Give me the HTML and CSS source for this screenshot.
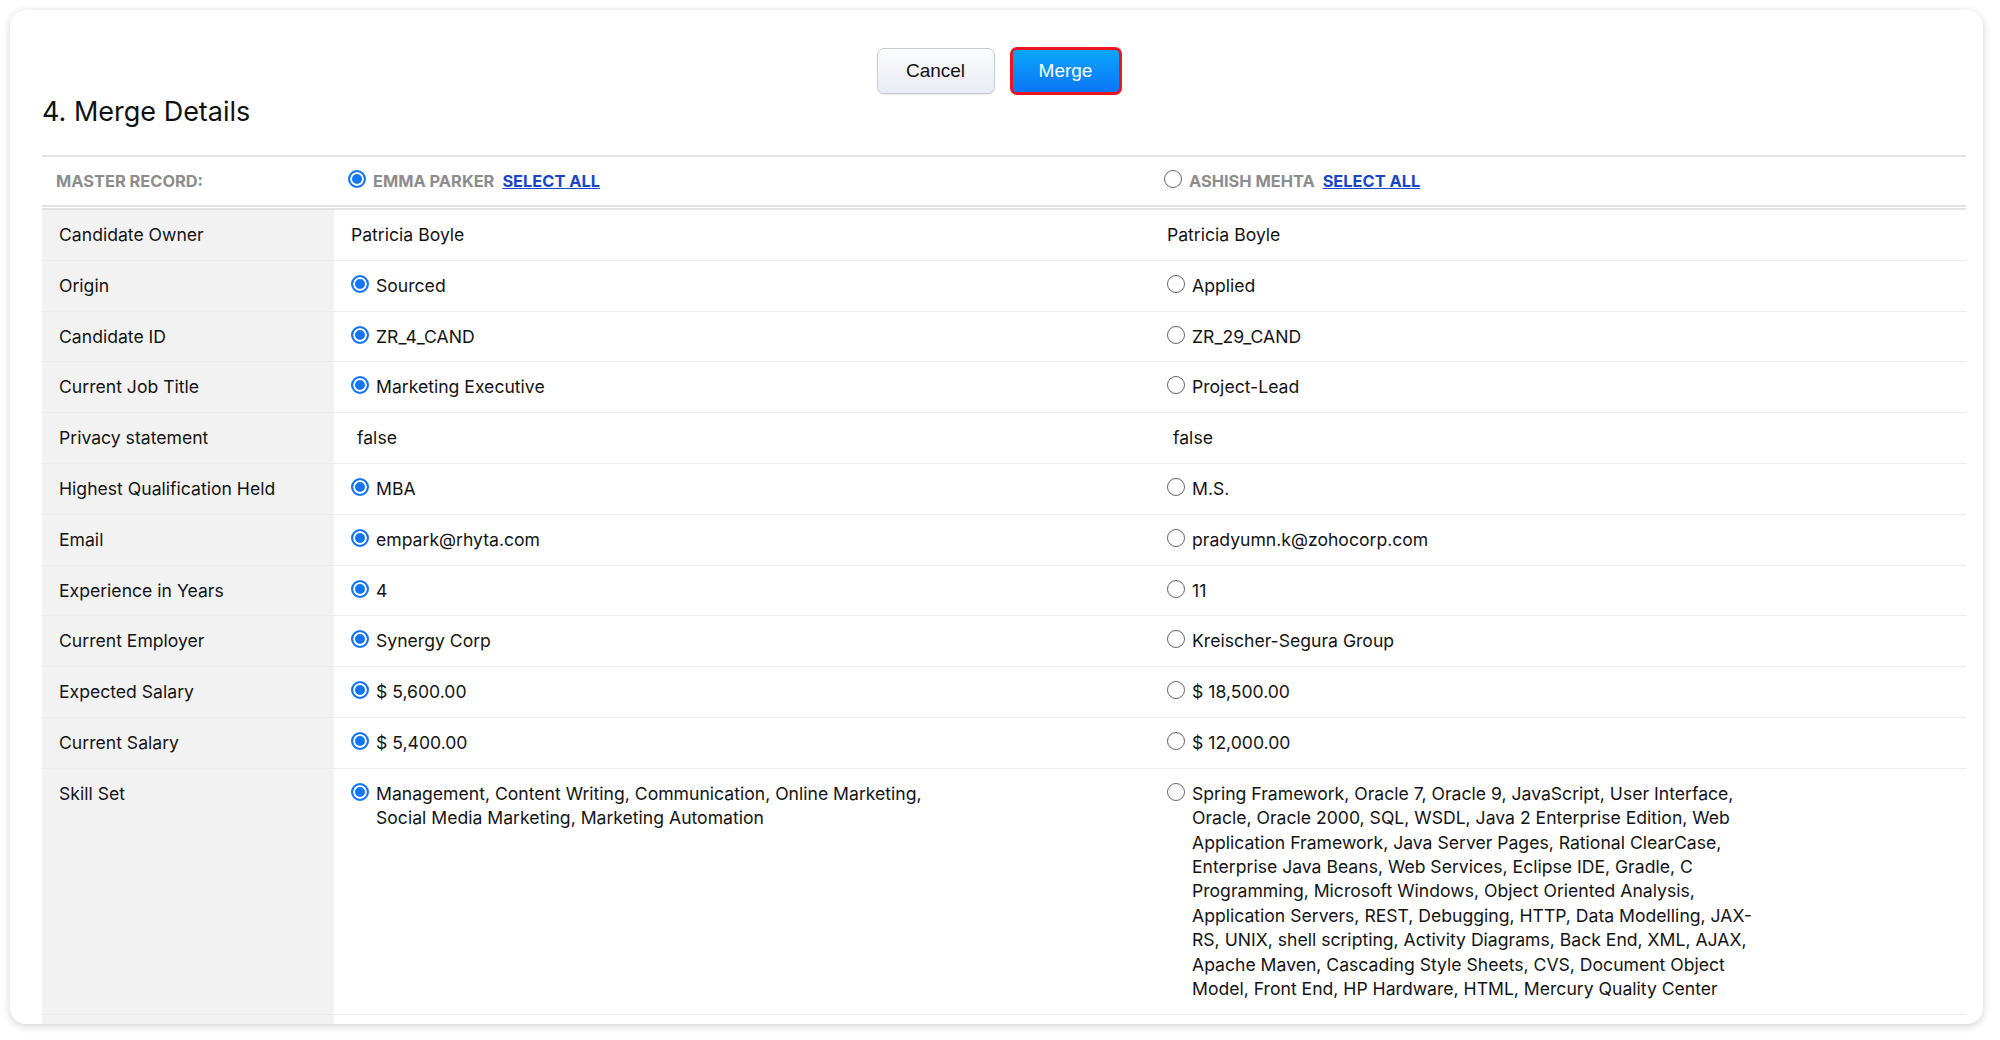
FILE: index.html
```html
<!DOCTYPE html>
<html lang="en">
<head>
  <meta charset="UTF-8" />
  <title>Merge Candidates</title>
  <link rel="stylesheet" href="styles.css">
</head>
<body>
<div class="card">
  <div class="actions">
    <button class="btn btn-cancel">Cancel</button>
    <button class="btn btn-merge">Merge</button>
  </div>
  <h2 class="title">4. Merge Details</h2>

  <div class="merge-table">
    <div class="row head">
      <div class="label">MASTER RECORD:</div>
      <div class="cell"><span class="radio on"></span><span class="rec-name">EMMA PARKER</span><a class="select-all" href="#">SELECT ALL</a></div>
      <div class="cell"><span class="radio"></span><span class="rec-name">ASHISH MEHTA</span><a class="select-all" href="#">SELECT ALL</a></div>
    </div>

    <div class="row">
      <div class="label">Candidate Owner</div>
      <div class="cell"><span class="val">Patricia Boyle</span></div>
      <div class="cell"><span class="val">Patricia Boyle</span></div>
    </div>
    <div class="row">
      <div class="label">Origin</div>
      <div class="cell"><span class="radio on"></span><span class="val">Sourced</span></div>
      <div class="cell"><span class="radio"></span><span class="val">Applied</span></div>
    </div>
    <div class="row">
      <div class="label">Candidate ID</div>
      <div class="cell"><span class="radio on"></span><span class="val">ZR_4_CAND</span></div>
      <div class="cell"><span class="radio"></span><span class="val">ZR_29_CAND</span></div>
    </div>
    <div class="row">
      <div class="label">Current Job Title</div>
      <div class="cell"><span class="radio on"></span><span class="val">Marketing Executive</span></div>
      <div class="cell"><span class="radio"></span><span class="val">Project-Lead</span></div>
    </div>
    <div class="row">
      <div class="label">Privacy statement</div>
      <div class="cell"><span class="val plain">false</span></div>
      <div class="cell"><span class="val plain">false</span></div>
    </div>
    <div class="row">
      <div class="label">Highest Qualification Held</div>
      <div class="cell"><span class="radio on"></span><span class="val">MBA</span></div>
      <div class="cell"><span class="radio"></span><span class="val">M.S.</span></div>
    </div>
    <div class="row">
      <div class="label">Email</div>
      <div class="cell"><span class="radio on"></span><span class="val">empark@rhyta.com</span></div>
      <div class="cell"><span class="radio"></span><span class="val">pradyumn.k@zohocorp.com</span></div>
    </div>
    <div class="row">
      <div class="label">Experience in Years</div>
      <div class="cell"><span class="radio on"></span><span class="val">4</span></div>
      <div class="cell"><span class="radio"></span><span class="val">11</span></div>
    </div>
    <div class="row">
      <div class="label">Current Employer</div>
      <div class="cell"><span class="radio on"></span><span class="val">Synergy Corp</span></div>
      <div class="cell"><span class="radio"></span><span class="val">Kreischer-Segura Group</span></div>
    </div>
    <div class="row">
      <div class="label">Expected Salary</div>
      <div class="cell"><span class="radio on"></span><span class="val">$ 5,600.00</span></div>
      <div class="cell"><span class="radio"></span><span class="val">$ 18,500.00</span></div>
    </div>
    <div class="row">
      <div class="label">Current Salary</div>
      <div class="cell"><span class="radio on"></span><span class="val">$ 5,400.00</span></div>
      <div class="cell"><span class="radio"></span><span class="val">$ 12,000.00</span></div>
    </div>
    <div class="row">
      <div class="label">Skill Set</div>
      <div class="cell"><span class="radio on"></span><span class="val">Management, Content Writing, Communication, Online Marketing, Social Media Marketing, Marketing Automation</span></div>
      <div class="cell"><span class="radio"></span><span class="val">Spring Framework, Oracle 7, Oracle 9, JavaScript, User Interface, Oracle, Oracle 2000, SQL, WSDL, Java 2 Enterprise Edition, Web Application Framework, Java Server Pages, Rational ClearCase, Enterprise Java Beans, Web Services, Eclipse IDE, Gradle, C Programming, Microsoft Windows, Object Oriented Analysis, Application Servers, REST, Debugging, HTTP, Data Modelling, JAX-RS, UNIX, shell scripting, Activity Diagrams, Back End, XML, AJAX, Apache Maven, Cascading Style Sheets, CVS, Document Object Model, Front End, HP Hardware, HTML, Mercury Quality Center</span></div>
    </div>
  </div>
</div>
</body>
</html>
```

FILE: styles.css
```css
body {
  margin: 0;
  background: #ffffff;
  font-family: Inter, "Open Sans", sans-serif;
  color: #141414;
}
.card {
  box-sizing: border-box;
  width: 1973px;
  height: 1014px;
  margin: 10px;
  padding: 37px 17px 0 32px;
  background: #fff;
  border-radius: 16px;
  box-shadow: 0 2px 9px rgba(0,0,0,0.18);
  overflow: hidden;
}
.actions {
  display: flex;
  justify-content: center;
  align-items: center;
  gap: 15px;
  height: 48px;
  padding-right: 10px;
}
.btn {
  font-family: "Liberation Sans", Arial, sans-serif;
  font-size: 19px;
  border-radius: 7px;
  cursor: pointer;
  box-sizing: border-box;
}
.btn-cancel {
  width: 118px;
  height: 46px;
  color: #111;
  border: 1px solid #c6cad5;
  background: linear-gradient(#fbfcfe, #e9ecf3);
  box-shadow: 0 1px 1px rgba(0,0,0,0.08);
}
.btn-merge {
  width: 112px;
  height: 48px;
  color: #fff;
  border: 3px solid #ea1424;
  background: linear-gradient(#0aa6f8, #0a76f6);
}
.title {
  margin: 0 0 26px;
  font-size: 27px;
  line-height: 34px;
  font-weight: 400;
  color: #111;
}
.merge-table {
  border-top: 2px solid #e4e4e4;
  background: linear-gradient(to right, #f2f2f2 292px, #fff 292px);
  padding-bottom: 20px;
}
.row {
  display: grid;
  grid-template-columns: 292px 1fr 1fr;
  border-bottom: 1px solid #ececec;
  font-size: 17.6px;
  line-height: 24.4px;
}
.row .label {
  padding: 13px 17px 12.4px;
}
.cell {
  display: flex;
  align-items: flex-start;
  gap: 7px;
  padding: 13px 17px 12.4px;
  background: #fff;
}
.row.head {
  background: #fff;
  border-bottom: 5px double #e2e2e2;
  font-size: 16.4px;
  line-height: 24px;
}
.row.head .label {
  padding: 12px 14px;
  color: #8d8d8d;
  font-weight: 700;
}
.row.head .cell {
  padding: 12px 14px;
}
.rec-name {
  color: #8d8d8d;
  font-weight: 700;
}
.select-all {
  color: #1746c8;
  font-weight: 700;
  text-decoration: underline;
  margin-left: 1px;
}
.val {
  max-width: 566px;
}
.val.plain {
  padding-left: 6px;
}
.radio {
  flex: none;
  width: 18px;
  height: 18px;
  margin-top: 1px;
  box-sizing: border-box;
  border-radius: 50%;
  border: 1.5px solid #666;
  background: #fff;
}
.radio.on {
  border: 2px solid #1476f4;
  background: #1476f4;
  box-shadow: inset 0 0 0 2px #fff;
}
```
